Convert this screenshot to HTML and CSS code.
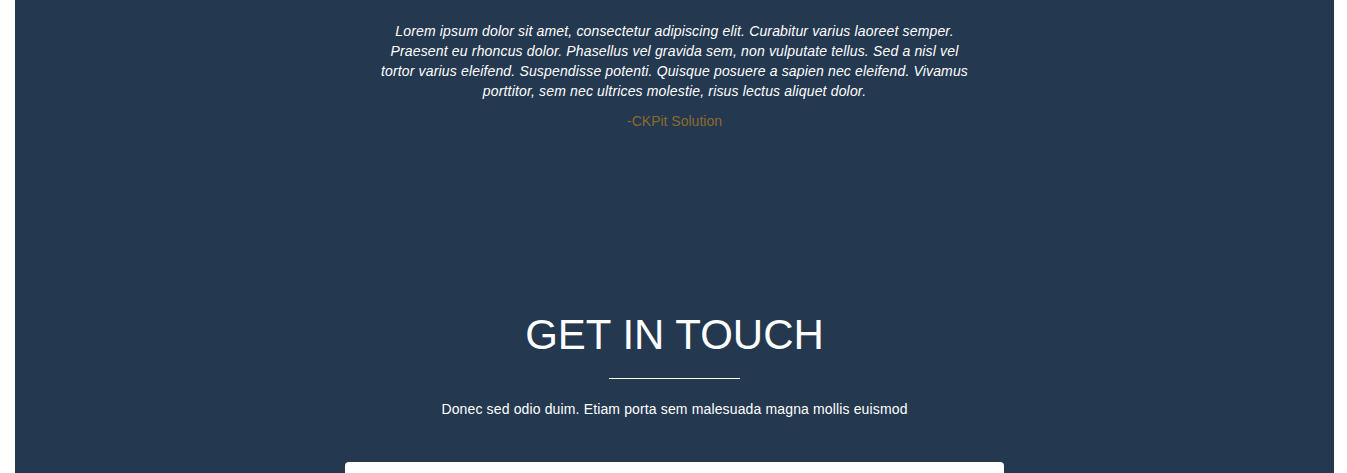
FILE: index.html
```html
<!DOCTYPE html>
<html lang="en">
<head>
<meta charset="utf-8">
<title>Get in touch</title>
<link rel="stylesheet" href="styles.css">
</head>
<body>
<div class="page">
  <section class="testimonial">
    <p class="quote">Lorem ipsum dolor sit amet, consectetur adipiscing elit. Curabitur varius laoreet semper. Praesent eu rhoncus dolor. Phasellus vel gravida sem, non vulputate tellus. Sed a nisl vel tortor varius eleifend. Suspendisse potenti. Quisque posuere a sapien nec eleifend. Vivamus porttitor, sem nec ultrices molestie, risus lectus aliquet dolor.</p>
    <p class="author">-CKPit Solution</p>
  </section>
  <section class="contact">
    <h2 class="contact-title">GET IN TOUCH</h2>
    <div class="divider"></div>
    <p class="contact-sub">Donec sed odio duim. Etiam porta sem malesuada magna mollis euismod</p>
    <div class="form-card"></div>
  </section>
</div>
</body>
</html>
```

FILE: styles.css
```css
html, body {
  margin: 0;
  padding: 0;
  background: #ffffff;
  height: 100%;
  overflow: hidden;
}
body {
  font-family: "Liberation Sans", Arial, sans-serif;
  color: #ffffff;
}
.page {
  margin: 0 13px 0 15px;
  background: #243850;
  min-height: 100%;
}
.testimonial {
  display: flex;
  flex-direction: column;
  align-items: center;
  padding-top: 21px;
}
.quote {
  margin: 0;
  max-width: 596px;
  font-size: 14px;
  line-height: 20px;
  font-style: italic;
  letter-spacing: 0.16px;
  text-align: center;
}
.author {
  margin: 10px 0 0;
  font-size: 14px;
  line-height: 20px;
  color: #8c6b2c;
}
.contact {
  display: flex;
  flex-direction: column;
  align-items: center;
  padding-top: 179px;
}
.contact-title {
  margin: 0;
  font-size: 42px;
  line-height: 50px;
  font-weight: normal;
}
.divider {
  width: 131px;
  height: 1px;
  background: #ffffff;
  margin-top: 18px;
}
.contact-sub {
  margin: 20px 0 0;
  font-size: 14px;
  line-height: 20px;
  letter-spacing: 0.14px;
}
.form-card {
  margin-top: 43px;
  width: 659px;
  height: 300px;
  background: #ffffff;
  border-radius: 4px;
}
```
